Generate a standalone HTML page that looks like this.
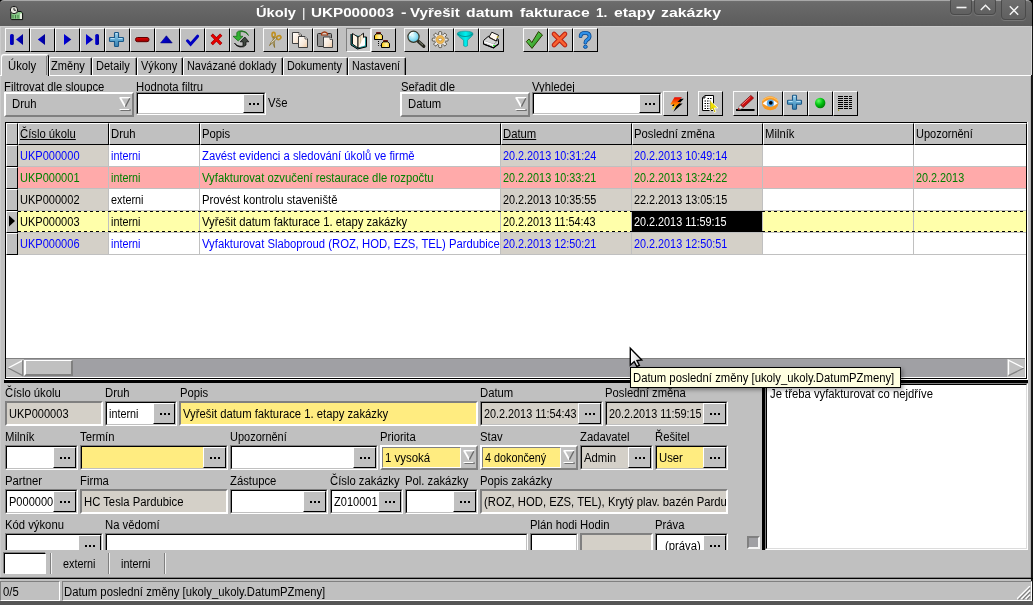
<!DOCTYPE html><html><head><meta charset="utf-8"><title>Ukoly</title><style>
html,body{margin:0;padding:0;}
body{width:1033px;height:605px;overflow:hidden;background:#c0c0c0;position:relative;font-family:"Liberation Sans",sans-serif;font-size:11.27px;color:#000;}
div,span{box-sizing:border-box;}
.a{position:absolute;}
.t{position:absolute;white-space:nowrap;line-height:14px;height:14px;}
.btn{position:absolute;background:#c0c0c0;border-top:1px solid #fafafa;border-left:1px solid #fafafa;border-right:1px solid #000;border-bottom:1px solid #000;}
.sunk{position:absolute;border-top:1px solid #808080;border-left:1px solid #808080;border-right:1px solid #fff;border-bottom:1px solid #fff;overflow:hidden;}
.sunk2{position:absolute;border-top:1px solid #808080;border-left:1px solid #808080;border-right:1px solid #fff;border-bottom:1px solid #fff;overflow:hidden;}
.sunk2 > .in{position:absolute;left:0;top:0;right:0;bottom:0;border-top:1px solid #000;border-left:1px solid #000;border-right:1px solid #c0c0c0;border-bottom:1px solid #c0c0c0;overflow:hidden;}
.dots{position:absolute;background:#c0c0c0;border-top:1px solid #fff;border-left:1px solid #fff;border-right:1px solid #000;border-bottom:1px solid #000;}
.dots i{position:absolute;width:2px;height:2px;background:#000;top:10px;}
.combo{position:absolute;border-top:1px solid #fff;border-left:1px solid #fff;border-right:1px solid #808080;border-bottom:1px solid #808080;overflow:hidden;}
.hd{position:absolute;background:#c0c0c0;border-top:1px solid #fff;border-left:1px solid #fff;border-right:1px solid #000;border-bottom:1px solid #000;overflow:hidden;}
.cell{position:absolute;overflow:hidden;border-right:1px solid #c0c0c0;border-bottom:1px solid #c0c0c0;white-space:nowrap;}
.cell span{position:absolute;left:2px;top:4px;line-height:14px;}
</style></head><body><div id="root" style="position:absolute;left:0;top:0;width:1033px;height:605px;overflow:hidden;will-change:transform;">
<div class="a" style="left:0;top:0;width:1033px;height:26px;background:#000;"></div>
<div class="a" style="left:0;top:0;width:1032px;height:26px;background:linear-gradient(#707070 0,#6a6a6a 2px,#5c5c5c 100%);border-radius:4px 5px 0 0;border-top:1px solid #a8a8a8;"></div>
<svg class="a" style="left:8px;top:4px" width="18" height="18" viewBox="8 4 18 18"><path d="M10.8 12.5H17L18 11.5H21L22.6 13V19.6H11.6L10.8 18.5Z" fill="#88c888" stroke="#101010" stroke-width="1"/><path d="M20 13.5H22V19H20Z" fill="#e8f0e0"/><path d="M13 15V18.5M15.5 15V18.5M18 15V18.5" stroke="#408040" stroke-width="1"/><circle cx="14" cy="10" r="3.7" fill="#e8e8e0" stroke="#181818" stroke-width="1"/><path d="M14 7.6V10.2H16.2" fill="none" stroke="#202020" stroke-width="1"/></svg>
<div class="t" style="left:256.1px;top:5px;font-size:13.5px;font-weight:bold;color:#fff;line-height:16px;height:16px;transform-origin:0 0;transform:scaleX(1.085);">Úkoly</div>
<div class="t" style="left:302.1px;top:5px;font-size:13.5px;font-weight:normal;color:#fff;line-height:16px;height:16px;transform-origin:0 0;transform:scaleX(1.000);">|</div>
<div class="t" style="left:311.1px;top:5px;font-size:13.5px;font-weight:bold;color:#fff;line-height:16px;height:16px;transform-origin:0 0;transform:scaleX(1.128);">UKP000003</div>
<div class="t" style="left:400.6px;top:5px;font-size:13.5px;font-weight:bold;color:#fff;line-height:16px;height:16px;transform-origin:0 0;transform:scaleX(1.223);">-</div>
<div class="t" style="left:409.7px;top:5px;font-size:13.5px;font-weight:bold;color:#fff;line-height:16px;height:16px;transform-origin:0 0;transform:scaleX(1.118);">Vyřešit</div>
<div class="t" style="left:465.9px;top:5px;font-size:13.5px;font-weight:bold;color:#fff;line-height:16px;height:16px;transform-origin:0 0;transform:scaleX(1.168);">datum</div>
<div class="t" style="left:519.6px;top:5px;font-size:13.5px;font-weight:bold;color:#fff;line-height:16px;height:16px;transform-origin:0 0;transform:scaleX(1.163);">fakturace</div>
<div class="t" style="left:595.7px;top:5px;font-size:13.5px;font-weight:bold;color:#fff;line-height:16px;height:16px;transform-origin:0 0;transform:scaleX(1.013);">1.</div>
<div class="t" style="left:613.8px;top:5px;font-size:13.5px;font-weight:bold;color:#fff;line-height:16px;height:16px;transform-origin:0 0;transform:scaleX(1.168);">etapy</div>
<div class="t" style="left:661.1px;top:5px;font-size:13.5px;font-weight:bold;color:#fff;line-height:16px;height:16px;transform-origin:0 0;transform:scaleX(1.176);">zakázky</div>
<div class="a" style="left:950px;top:-3px;width:22px;height:18px;border:1px solid #4a4a4a;border-radius:4px;background:linear-gradient(#6e6e6e,#606060);box-shadow:0 1px 0 #777;"><svg class="a" style="left:0;top:0" width="22" height="18"><path d="M5.5 9.5H15.5" stroke="#f4f4f4" stroke-width="1.6"/></svg></div>
<div class="a" style="left:974px;top:-3px;width:22px;height:18px;border:1px solid #4a4a4a;border-radius:4px;background:linear-gradient(#6e6e6e,#606060);box-shadow:0 1px 0 #777;"><svg class="a" style="left:0;top:0" width="22" height="18"><path d="M5.8 12L10.5 7.3L15.2 12" stroke="#f4f4f4" stroke-width="1.4" fill="none"/></svg></div>
<div class="a" style="left:1001px;top:-3px;width:25px;height:23px;border:1px solid #4a4a4a;border-radius:4px;background:linear-gradient(#6e6e6e,#606060);box-shadow:0 1px 0 #777;"><svg class="a" style="left:0;top:0" width="25" height="23"><path d="M7.8 8.3L16.2 16.7M16.2 8.3L7.8 16.7" stroke="#f4f4f4" stroke-width="1.4" fill="none"/></svg></div>
<div class="a" style="left:1030px;top:76px;width:1px;height:501px;background:#b0b0b0;"></div>
<div class="a" style="left:1031px;top:75px;width:1px;height:530px;background:#161616;"></div>
<div class="a" style="left:1031px;top:26px;width:1px;height:49px;background:#d4d4d4;"></div>
<div class="a" style="left:1032px;top:26px;width:1px;height:579px;background:#161616;"></div>
<div class="a" style="left:0;top:601px;width:1033px;height:4px;background:#555;"></div>
<div class="a" style="left:0;top:26px;width:1030px;height:1px;background:#cccccc;"></div>
<div class="a" style="left:0;top:26px;width:1px;height:575px;background:#cccccc;"></div>
<svg width="0" height="0" style="position:absolute"><defs>
<linearGradient id="gb" x1="0" y1="0" x2="1" y2="0"><stop offset="0" stop-color="#0000e0"/><stop offset="1" stop-color="#000090"/></linearGradient>
<linearGradient id="gpl" x1="0" y1="0" x2="0" y2="1"><stop offset="0" stop-color="#a8d8f0"/><stop offset="0.5" stop-color="#60a8d0"/><stop offset="1" stop-color="#3880b0"/></linearGradient>
<linearGradient id="grd" x1="0" y1="0" x2="0" y2="1"><stop offset="0" stop-color="#e80000"/><stop offset="1" stop-color="#900000"/></linearGradient>
<linearGradient id="ggr" x1="0" y1="0" x2="1" y2="1"><stop offset="0" stop-color="#70e060"/><stop offset="1" stop-color="#208818"/></linearGradient>
<linearGradient id="gyl" x1="0" y1="0" x2="1" y2="0"><stop offset="0" stop-color="#ffc800"/><stop offset="0.6" stop-color="#fff0a0"/><stop offset="1" stop-color="#ffd020"/></linearGradient>
<linearGradient id="gfl" x1="0" y1="0" x2="0" y2="1"><stop offset="0" stop-color="#e80000"/><stop offset="0.5" stop-color="#ff8000"/><stop offset="1" stop-color="#ffff00"/></linearGradient>
<linearGradient id="gcy" x1="0" y1="0" x2="1" y2="0"><stop offset="0" stop-color="#00b0b0"/><stop offset="0.55" stop-color="#00f0f0"/><stop offset="1" stop-color="#00a8a8"/></linearGradient>
<radialGradient id="gball" cx="0.35" cy="0.3" r="0.8"><stop offset="0" stop-color="#60ff60"/><stop offset="0.5" stop-color="#00c010"/><stop offset="1" stop-color="#007000"/></radialGradient>
<radialGradient id="glens" cx="0.4" cy="0.35" r="0.8"><stop offset="0" stop-color="#e8ffff"/><stop offset="0.6" stop-color="#80d8f0"/><stop offset="1" stop-color="#40a8d0"/></radialGradient>
<linearGradient id="gpg" x1="0" y1="0" x2="1" y2="1"><stop offset="0" stop-color="#ffffff"/><stop offset="0.6" stop-color="#f8e8d8"/><stop offset="1" stop-color="#f0c8a0"/></linearGradient>
<linearGradient id="gq" x1="0" y1="0" x2="1" y2="1"><stop offset="0" stop-color="#50a8f0"/><stop offset="1" stop-color="#1060b0"/></linearGradient>
</defs></svg>
<div class="btn" id="tb0" style="left:5px;top:28px;width:25px;height:24px;"><svg class="a" style="left:-1px;top:-1px" width="25" height="24"><rect x="5" y="6" width="3.8" height="11" rx="1.6" fill="url(#gb)"/><path d="M11 11.5L18 6V17Z" fill="url(#gb)"/></svg></div>
<div class="btn" id="tb1" style="left:30px;top:28px;width:25px;height:24px;"><svg class="a" style="left:-1px;top:-1px" width="25" height="24"><path d="M7.8 11.5L15 6V17Z" fill="url(#gb)"/></svg></div>
<div class="btn" id="tb2" style="left:55px;top:28px;width:25px;height:24px;"><svg class="a" style="left:-1px;top:-1px" width="25" height="24"><path d="M16.3 11.5L9 6V17Z" fill="url(#gb)"/></svg></div>
<div class="btn" id="tb3" style="left:80px;top:28px;width:25px;height:24px;"><svg class="a" style="left:-1px;top:-1px" width="25" height="24"><path d="M13 11.5L6 6V17Z" fill="url(#gb)"/><rect x="15.2" y="6" width="3.8" height="11" rx="1.6" fill="url(#gb)"/></svg></div>
<div class="btn" id="tb4" style="left:105px;top:28px;width:25px;height:24px;"><svg class="a" style="left:-1px;top:-1px" width="25" height="24"><path d="M10.3 4.5H12.7Q13.5 4.5 13.5 5.3V9.5H17.7Q18.5 9.5 18.5 10.3V12.7Q18.5 13.5 17.7 13.5H13.5V17.7Q13.5 18.5 12.7 18.5H10.3Q9.5 18.5 9.5 17.7V13.5H5.3Q4.5 13.5 4.5 12.7V10.3Q4.5 9.5 5.3 9.5H9.5V5.3Q9.5 4.5 10.3 4.5Z" fill="url(#gpl)" stroke="#1a5888" stroke-width="1.1"/><path d="M10.6 5.6H12.4M5.6 10.6H9.6M13.4 10.6H17.4" stroke="#c8ecff" stroke-width="0.9" fill="none"/></svg></div>
<div class="btn" id="tb5" style="left:130px;top:28px;width:25px;height:24px;"><svg class="a" style="left:-1px;top:-1px" width="25" height="24"><rect x="5.5" y="9.5" width="13.5" height="4.2" rx="2" fill="url(#grd)" stroke="#600000" stroke-width="1"/></svg></div>
<div class="btn" id="tb6" style="left:155px;top:28px;width:25px;height:24px;"><svg class="a" style="left:-1px;top:-1px" width="25" height="24"><path d="M11.4 7.8L17.2 14.9H5.6Z" fill="url(#gb)" stroke="#000080" stroke-width="0.6"/></svg></div>
<div class="btn" id="tb7" style="left:180px;top:28px;width:25px;height:24px;"><svg class="a" style="left:-1px;top:-1px" width="25" height="24"><path d="M7.5 12.8L10.6 16.2L17.6 8.2" fill="none" stroke="#0000c0" stroke-width="3" stroke-linecap="round" stroke-linejoin="miter"/></svg></div>
<div class="btn" id="tb8" style="left:205px;top:28px;width:25px;height:24px;"><svg class="a" style="left:-1px;top:-1px" width="25" height="24"><path d="M6.7 6.7L16.2 16.2M16.2 6.7L6.7 16.2" fill="none" stroke="#900000" stroke-width="3.2" stroke-linecap="butt"/><path d="M7 7L15.9 15.9M15.9 7L7 15.9" fill="none" stroke="#e80000" stroke-width="2.2" stroke-linecap="butt"/></svg></div>
<div class="btn" id="tb9" style="left:230px;top:28px;width:25px;height:24px;"><svg class="a" style="left:-1px;top:-1px" width="25" height="24"><path d="M18.5 7.5Q16 3.2 10.2 3.6L10.2 8.3H13L8.2 13L3 8.3H6.8V4.5Q8 2.5 12 2.8Q17 3.2 18.5 7.5Z" fill="#30b030" stroke="#106010" stroke-width="0.7"/><path d="M4.5 15Q7 18.8 13 18.2L13 13.8H10.2L14.8 9L18.8 13.8H16V17Q14 19.6 10 19Q6 18.4 4.5 15Z" fill="#404840" stroke="#000" stroke-width="0.7"/></svg></div>
<div class="btn" id="tb10" style="left:263px;top:28px;width:25px;height:24px;"><svg class="a" style="left:-1px;top:-1px" width="25" height="24"><ellipse cx="10.6" cy="6.8" rx="1.6" ry="2.4" fill="none" stroke="#c09020" stroke-width="1.6"/><ellipse cx="15.8" cy="9.6" rx="2.2" ry="1.8" fill="none" stroke="#c09020" stroke-width="1.6" transform="rotate(-30 15.8 9.6)"/><path d="M11 9L11.6 19.5L10.2 16L10.2 9Z" fill="#e8e8e8" stroke="#806820" stroke-width="0.8"/><path d="M14 10.5L6.5 17.5L8.2 14L12.5 9.8Z" fill="#e8e8e8" stroke="#806820" stroke-width="0.8"/></svg></div>
<div class="btn" id="tb11" style="left:288px;top:28px;width:25px;height:24px;"><svg class="a" style="left:-1px;top:-1px" width="25" height="24"><path d="M4.5 4.5H11L13.5 7V15.5H4.5Z" fill="url(#gpg)" stroke="#404040" stroke-width="1"/><path d="M11 4.5V7H13.5" fill="#fff" stroke="#404040" stroke-width="0.8"/><path d="M10.5 8.5H17L19.5 11V19.5H10.5Z" fill="url(#gpg)" stroke="#404040" stroke-width="1"/><path d="M17 8.5V11H19.5" fill="#fff" stroke="#404040" stroke-width="0.8"/></svg></div>
<div class="btn" id="tb12" style="left:313px;top:28px;width:25px;height:24px;"><svg class="a" style="left:-1px;top:-1px" width="25" height="24"><rect x="4.5" y="5.5" width="14" height="13" rx="1" fill="#989898" stroke="#303030" stroke-width="1"/><path d="M8.5 7V5.5Q11.5 2.5 14.5 5.5V7Z" fill="#d8d0c8" stroke="#a03810" stroke-width="1.2"/><path d="M10.5 9H17L19.5 11.5V19.5H10.5Z" fill="url(#gpg)" stroke="#404040" stroke-width="1"/><path d="M17 9V11.5H19.5" fill="#fff" stroke="#404040" stroke-width="0.8"/></svg></div>
<div class="a" id="tb13" style="left:346px;top:28px;width:25px;height:24px;background:#c8c8c8;border-top:1px solid #808080;border-left:1px solid #808080;border-right:1px solid #fff;border-bottom:1px solid #fff;"><svg class="a" style="left:-1px;top:-1px" width="25" height="24"><path d="M5 6V17L11.5 21L20.5 18.8V9H18" fill="#209898" stroke="#000" stroke-width="1"/><path d="M6.5 5.5L12 9V20L6.5 16Z" fill="#fff4e4" stroke="#000" stroke-width="0.9"/><path d="M12 9L14.5 7.5L17.5 5.2V16.5L12 20Z" fill="#f4e4c8" stroke="#000" stroke-width="0.9"/><path d="M14.5 7.5V18.2" stroke="#c8b898" stroke-width="0.8"/><path d="M17.5 9.5H19V17.5L12.5 19.5" fill="#fff" stroke="none"/></svg></div>
<div class="btn" id="tb14" style="left:371px;top:28px;width:25px;height:24px;"><svg class="a" style="left:-1px;top:-1px" width="25" height="24"><path d="M5.5 4.5H9.5V6H5.5Z" fill="#900000" stroke="#600000" stroke-width="0.8"/><path d="M3.5 7.5L5.5 5.8H9.5L11.5 7.5V11.5H3.5Z" fill="url(#gyl)" stroke="#000" stroke-width="1"/><path d="M12.5 12.5H16.5V14H12.5Z" fill="#900000" stroke="#600000" stroke-width="0.8"/><path d="M10.5 15.5L12.5 13.8H16.5L18.5 15.5V19.5H10.5Z" fill="url(#gyl)" stroke="#000" stroke-width="1"/><path d="M7.5 13V17.5H9.5" fill="none" stroke="#000" stroke-width="1" stroke-dasharray="1 1"/></svg></div>
<div class="btn" id="tb15" style="left:404px;top:28px;width:25px;height:24px;"><svg class="a" style="left:-1px;top:-1px" width="25" height="24"><path d="M14.2 13.2L19.8 18.3" stroke="#282820" stroke-width="3.2" stroke-linecap="round"/><path d="M15 13.6L19 17.2" stroke="#a0a890" stroke-width="0.8"/><circle cx="9.5" cy="8.8" r="5.6" fill="url(#glens)" stroke="#383828" stroke-width="1.2"/><path d="M5.8 8Q6.4 4.8 9.8 4.6" fill="none" stroke="#fff" stroke-width="1.2"/></svg></div>
<div class="btn" id="tb16" style="left:429px;top:28px;width:25px;height:24px;"><svg class="a" style="left:-1px;top:-1px" width="25" height="24"><g transform="translate(11.2,11.6)"><g fill="#e8e8e8" stroke="#403828" stroke-width="0.8"><rect x="-1.5" y="-8" width="3" height="16" rx="1"/><rect x="-1.5" y="-8" width="3" height="16" rx="1" transform="rotate(45)"/><rect x="-1.5" y="-8" width="3" height="16" rx="1" transform="rotate(90)"/><rect x="-1.5" y="-8" width="3" height="16" rx="1" transform="rotate(135)"/></g><circle r="5.2" fill="#e8e8e8"/><circle r="4.2" fill="#f0b850" stroke="#c89038" stroke-width="0.6"/><ellipse rx="1.8" ry="1.3" fill="#fff" stroke="#806020" stroke-width="0.5"/></g></svg></div>
<div class="btn" id="tb17" style="left:454px;top:28px;width:25px;height:24px;"><svg class="a" style="left:-1px;top:-1px" width="25" height="24"><path d="M3.2 6Q3.2 3.2 11 3.2Q19 3.2 19 6Q19 7.5 13.5 12.2V17.8Q11.5 19.4 9.6 17.8V12.2Q3.2 7.5 3.2 6Z" fill="url(#gcy)" stroke="#009090" stroke-width="0.6"/><path d="M3.6 6Q7 8.6 11 8.6Q15.5 8.6 18.6 6" fill="none" stroke="#008888" stroke-width="0.8"/></svg></div>
<div class="btn" id="tb18" style="left:479px;top:28px;width:25px;height:24px;"><svg class="a" style="left:-1px;top:-1px" width="25" height="24"><path d="M10 9L12.8 4.2L19.5 7.2L17.2 13Z" fill="#fff8f0" stroke="#000" stroke-width="0.9"/><path d="M10.2 9.6L16.8 13" stroke="#f0c890" stroke-width="1.2"/><path d="M4.5 12.5L9.5 8.2L10.2 9.5L17 13L19.5 11.5V16L14.5 19.8L4.5 16Z" fill="#d8d8d8" stroke="#000" stroke-width="1"/><path d="M4.5 12.8L14.5 16.4L19.5 12.2" fill="none" stroke="#888" stroke-width="0.8"/><path d="M5.2 13.6L14 16.8V19" fill="none" stroke="#fff" stroke-width="1.4"/><path d="M4.5 16L14.5 19.8L19.5 16" fill="none" stroke="#000" stroke-width="1.3"/><rect x="14.2" y="17" width="1.6" height="1.4" fill="#00e000"/><path d="M17.8 9.6L19.4 8.4" stroke="#d0c020" stroke-width="1.2"/></svg></div>
<div class="btn" id="tb19" style="left:523px;top:28px;width:25px;height:24px;"><svg class="a" style="left:-1px;top:-1px" width="25" height="24"><path d="M3.3 13.6L6 11L8.8 14.6L15.5 3.6L19.5 7L9 20.4Z" fill="url(#ggr)" stroke="#283c00" stroke-width="1" stroke-linejoin="round"/></svg></div>
<div class="btn" id="tb20" style="left:548px;top:28px;width:25px;height:24px;"><svg class="a" style="left:-1px;top:-1px" width="25" height="24"><path d="M6 6L17 17M17 6L6 17" fill="none" stroke="#b82010" stroke-width="4.6" stroke-linecap="round"/><path d="M6 6L17 17M17 6L6 17" fill="none" stroke="#f86030" stroke-width="2.6" stroke-linecap="round"/></svg></div>
<div class="btn" id="tb21" style="left:573px;top:28px;width:25px;height:24px;"><svg class="a" style="left:-1px;top:-1px" width="25" height="24"><path d="M7.6 8.2Q7.6 4.8 12 4.8Q16.6 4.8 16.6 8.2Q16.6 10.4 14.2 11.8Q12.6 12.8 12.4 14.6" fill="none" stroke="#0c4a90" stroke-width="3.8" stroke-linecap="round"/><path d="M7.6 8.2Q7.6 4.8 12 4.8Q16.6 4.8 16.6 8.2Q16.6 10.4 14.2 11.8Q12.6 12.8 12.4 14.6" fill="none" stroke="#3090e8" stroke-width="2.2" stroke-linecap="round"/><ellipse cx="12.4" cy="18.8" rx="1.9" ry="1.6" fill="#3090e8" stroke="#0c4a90" stroke-width="0.9"/></svg></div>
<div class="a" style="left:0;top:75px;width:1031px;height:1px;background:#fff;"></div>
<div class="a" style="left:49px;top:57px;width:43px;height:18px;border-top:1px solid #fff;border-left:1px solid #fff;border-right:1px solid #000;border-radius:2px 2px 0 0;"></div>
<div class="a" style="left:90px;top:58px;width:1px;height:17px;background:#808080;"></div>
<div class="t" style="left:51px;top:59px;color:#000;font-size:12px;transform-origin:0 0;transform:scaleX(0.924);">Změny</div>
<div class="a" style="left:92px;top:57px;width:45px;height:18px;border-top:1px solid #fff;border-left:1px solid #fff;border-right:1px solid #000;border-radius:2px 2px 0 0;"></div>
<div class="a" style="left:135px;top:58px;width:1px;height:17px;background:#808080;"></div>
<div class="t" style="left:95.5px;top:59px;color:#000;font-size:12px;transform-origin:0 0;transform:scaleX(0.918);">Detaily</div>
<div class="a" style="left:137px;top:57px;width:46px;height:18px;border-top:1px solid #fff;border-left:1px solid #fff;border-right:1px solid #000;border-radius:2px 2px 0 0;"></div>
<div class="a" style="left:181px;top:58px;width:1px;height:17px;background:#808080;"></div>
<div class="t" style="left:140.5px;top:59px;color:#000;font-size:12px;transform-origin:0 0;transform:scaleX(0.92);">Výkony</div>
<div class="a" style="left:183px;top:57px;width:100px;height:18px;border-top:1px solid #fff;border-left:1px solid #fff;border-right:1px solid #000;border-radius:2px 2px 0 0;"></div>
<div class="a" style="left:281px;top:58px;width:1px;height:17px;background:#808080;"></div>
<div class="t" style="left:187px;top:59px;color:#000;font-size:12px;transform-origin:0 0;transform:scaleX(0.907);">Navázané doklady</div>
<div class="a" style="left:283px;top:57px;width:65px;height:18px;border-top:1px solid #fff;border-left:1px solid #fff;border-right:1px solid #000;border-radius:2px 2px 0 0;"></div>
<div class="a" style="left:346px;top:58px;width:1px;height:17px;background:#808080;"></div>
<div class="t" style="left:286.5px;top:59px;color:#000;font-size:12px;transform-origin:0 0;transform:scaleX(0.904);">Dokumenty</div>
<div class="a" style="left:348px;top:57px;width:58px;height:18px;border-top:1px solid #fff;border-left:1px solid #fff;border-right:1px solid #000;border-radius:2px 2px 0 0;"></div>
<div class="a" style="left:404px;top:58px;width:1px;height:17px;background:#808080;"></div>
<div class="t" style="left:351.5px;top:59px;color:#000;font-size:12px;transform-origin:0 0;transform:scaleX(0.89);">Nastavení</div>
<div class="a" style="left:1px;top:54px;width:48px;height:22px;background:#c0c0c0;border-top:1px solid #fff;border-left:1px solid #fff;box-shadow:inset 0 1px 0 #dedede;border-right:1px solid #000;border-radius:3px 3px 0 0;"></div>
<div class="a" style="left:46px;top:56px;width:1px;height:19px;background:#808080;"></div>
<div class="t" style="left:8px;top:59px;color:#000;font-size:12px;transform-origin:0 0;transform:scaleX(0.94);">Úkoly</div>
<div class="t" style="left:4px;top:80px;color:#000;font-size:12px;transform-origin:0 0;transform:scaleX(0.94);">Filtrovat dle sloupce</div>
<div class="t" style="left:136px;top:80px;color:#000;font-size:12px;transform-origin:0 0;transform:scaleX(0.94);">Hodnota filtru</div>
<div class="t" style="left:401px;top:80px;color:#000;font-size:12px;transform-origin:0 0;transform:scaleX(0.94);">Seřadit dle</div>
<div class="t" style="left:532px;top:80px;color:#000;font-size:12px;transform-origin:0 0;transform:scaleX(0.94);">Vyhledej</div>
<div class="combo" style="left:4px;top:92px;width:130px;height:25px;background:#c0c0c0;border-width:2px;"><div class="t" style="left:6px;top:3px;font-size:12px;transform-origin:0 0;transform:scaleX(0.94);">Druh</div><svg class="a" style="right:1.5px;top:3px" width="12" height="16" viewBox="0 0 12 16"><path d="M1.2 0.8L6.2 9.8" stroke="#fff" stroke-width="1.8" fill="none"/><path d="M0.5 0.7H11.2" stroke="#fff" stroke-width="1.4" fill="none"/><path d="M10.8 1.2L6.4 9.6" stroke="#686868" stroke-width="1.3" fill="none"/><path d="M0.5 12.5H11" stroke="#fff" stroke-width="1"/><path d="M1.5 13.5H11.5" stroke="#707070" stroke-width="1"/><path d="M11 12V14" stroke="#707070" stroke-width="1"/></svg></div>
<div class="combo" style="left:400px;top:92px;width:130px;height:25px;background:#c0c0c0;border-width:2px;"><div class="t" style="left:6px;top:3px;font-size:12px;transform-origin:0 0;transform:scaleX(0.94);">Datum</div><svg class="a" style="right:1.5px;top:3px" width="12" height="16" viewBox="0 0 12 16"><path d="M1.2 0.8L6.2 9.8" stroke="#fff" stroke-width="1.8" fill="none"/><path d="M0.5 0.7H11.2" stroke="#fff" stroke-width="1.4" fill="none"/><path d="M10.8 1.2L6.4 9.6" stroke="#686868" stroke-width="1.3" fill="none"/><path d="M0.5 12.5H11" stroke="#fff" stroke-width="1"/><path d="M1.5 13.5H11.5" stroke="#707070" stroke-width="1"/><path d="M11 12V14" stroke="#707070" stroke-width="1"/></svg></div>
<div class="a" style="left:136px;top:92px;width:130px;height:23px;background:#fff;border-top:1px solid #808080;border-left:1px solid #808080;border-right:1px solid #fff;border-bottom:1px solid #fff;overflow:hidden;"><div class="a" style="left:0;top:0;right:0;bottom:0;border-top:1px solid #000;border-left:1px solid #000;border-right:1px solid #c0c0c0;border-bottom:1px solid #c0c0c0;"></div><div class="t" style="left:3px;top:4px;font-size:12px;transform-origin:0 0;transform:scaleX(0.94);color:#000"></div></div>

<div class="dots" style="left:243px;top:94px;width:21px;height:19px;"><i style="left:5px;top:8px"></i><i style="left:9px;top:8px"></i><i style="left:13px;top:8px"></i></div>
<div class="t" style="left:268px;top:96px;color:#000;font-size:12px;transform-origin:0 0;transform:scaleX(0.94);">Vše</div>
<div class="a" style="left:532px;top:92px;width:130px;height:23px;background:#fff;border-top:1px solid #808080;border-left:1px solid #808080;border-right:1px solid #fff;border-bottom:1px solid #fff;overflow:hidden;"><div class="a" style="left:0;top:0;right:0;bottom:0;border-top:1px solid #000;border-left:1px solid #000;border-right:1px solid #c0c0c0;border-bottom:1px solid #c0c0c0;"></div><div class="t" style="left:3px;top:4px;font-size:12px;transform-origin:0 0;transform:scaleX(0.94);color:#000"></div></div>

<div class="dots" style="left:639px;top:94px;width:21px;height:19px;"><i style="left:5px;top:8px"></i><i style="left:9px;top:8px"></i><i style="left:13px;top:8px"></i></div>
<div class="btn" id="fb0" style="left:663px;top:91px;width:25px;height:25px;"><svg class="a" style="left:-1px;top:-1px" width="25" height="25"><path d="M12.5 7.2H20L15.4 12H18.8L9.6 20.3L12.5 14.5H8.2Z" transform="translate(0.8,0.5)" fill="#000"/><path d="M11.5 6.2H19L14.4 11H17.8L8.6 19.3L11.5 13.5H7.2Z" fill="url(#gfl)"/></svg></div>
<div class="btn" id="fb1" style="left:698px;top:91px;width:25px;height:25px;"><svg class="a" style="left:-1px;top:-1px" width="25" height="25"><path d="M7 4.5H15.5V19.5H4.5V7Z" fill="#fff" stroke="#000" stroke-width="1"/><path d="M7 4.5V7H4.5Z" fill="#c0c0c0" stroke="#000" stroke-width="0.8"/><g stroke="#000" stroke-width="1.2" stroke-dasharray="1.5 1"><path d="M6.5 10H14"/><path d="M6.5 12.5H14"/><path d="M6.5 15H14"/><path d="M6.5 17.5H14"/><path d="M9.5 7.5H14"/></g><path d="M12 9.5V20L14.6 17.6L16.4 21.6L18 20.8L16.2 17H20Z" fill="#f0e000" stroke="#fff" stroke-width="0.8"/><path d="M12.5 10V19L14.8 16.8L16.8 21" fill="none" stroke="#a09000" stroke-width="0.6"/></svg></div>
<div class="btn" id="fb2" style="left:733px;top:91px;width:25px;height:25px;"><svg class="a" style="left:-1px;top:-1px" width="25" height="25"><path d="M3 19H21.5" stroke="#000" stroke-width="2"/><path d="M17.8 4.4L20.6 7L10.3 16.6L7.5 14Z" fill="#c81010" stroke="#780000" stroke-width="0.7"/><path d="M17.4 6L9.2 13.6" stroke="#ff9090" stroke-width="0.8"/><path d="M7.2 14L10.2 17L7.6 18.2L5.2 18.6L5.8 16Z" fill="#e0e0e0" stroke="#606060" stroke-width="0.6"/><path d="M5.2 18.6L6.4 17.4" stroke="#c00000" stroke-width="1.4"/></svg></div>
<div class="btn" id="fb3" style="left:758px;top:91px;width:25px;height:25px;"><svg class="a" style="left:-1px;top:-1px" width="25" height="25"><ellipse cx="12.2" cy="12.2" rx="8.2" ry="7" fill="#f89820"/><path d="M4.2 12.4Q12.2 4.6 20.2 12.4Q12.2 19 4.2 12.4Z" fill="#fff" stroke="#e08010" stroke-width="0.5"/><circle cx="12.4" cy="12.2" r="3.6" fill="#58a8e8"/><circle cx="12.8" cy="11.8" r="1.9" fill="#000"/><path d="M4.4 9.6Q12 2.6 20 9.6" fill="none" stroke="#ffc060" stroke-width="1.2"/></svg></div>
<div class="btn" id="fb4" style="left:783px;top:91px;width:25px;height:25px;"><svg class="a" style="left:-1px;top:-1px" width="25" height="25"><g transform="translate(0,-0.2)"><path d="M10.3 4.5H12.7Q13.5 4.5 13.5 5.3V9.5H17.7Q18.5 9.5 18.5 10.3V12.7Q18.5 13.5 17.7 13.5H13.5V17.7Q13.5 18.5 12.7 18.5H10.3Q9.5 18.5 9.5 17.7V13.5H5.3Q4.5 13.5 4.5 12.7V10.3Q4.5 9.5 5.3 9.5H9.5V5.3Q9.5 4.5 10.3 4.5Z" fill="url(#gpl)" stroke="#1a5888" stroke-width="1.1"/><path d="M10.6 5.6H12.4M5.6 10.6H9.6M13.4 10.6H17.4" stroke="#c8ecff" stroke-width="0.9" fill="none"/></g></svg></div>
<div class="btn" id="fb5" style="left:808px;top:91px;width:25px;height:25px;"><svg class="a" style="left:-1px;top:-1px" width="25" height="25"><circle cx="12.2" cy="12" r="5.2" fill="url(#gball)"/></svg></div>
<div class="btn" id="fb6" style="left:833px;top:91px;width:25px;height:25px;"><svg class="a" style="left:-1px;top:-1px" width="25" height="25"><g stroke="#000" stroke-width="1"><path d="M5 5.5H10M11 5.5H15M16 5.5H19"/><path d="M5 7.5H10M11 7.5H15M16 7.5H19"/><path d="M5 9.5H10M11 9.5H15M16 9.5H19"/><path d="M5 11.5H10M11 11.5H15M16 11.5H19"/><path d="M5 13.5H10M11 13.5H15M16 13.5H19"/><path d="M5 15.5H10M11 15.5H15M16 15.5H19"/><path d="M5 17.5H10M11 17.5H15M16 17.5H19"/></g><rect x="5" y="18.6" width="1.2" height="1.2" fill="#a09000"/></svg></div>
<div class="a" style="left:5px;top:122px;width:1023px;height:258px;background:#fff;"></div>
<div class="a" style="left:5px;top:122px;width:1022px;height:257px;border:1px solid #000;"></div>
<div class="hd" style="left:6px;top:123px;width:12px;height:22px;"></div>
<div class="hd" style="left:18px;top:123px;width:91px;height:22px;"><div class="t" style="left:1px;top:3px;font-size:12px;transform-origin:0 0;transform:scaleX(0.94);text-decoration:underline;">Číslo úkolu</div></div>
<div class="hd" style="left:109px;top:123px;width:91px;height:22px;"><div class="t" style="left:1px;top:3px;font-size:12px;transform-origin:0 0;transform:scaleX(0.94);">Druh</div></div>
<div class="hd" style="left:200px;top:123px;width:301px;height:22px;"><div class="t" style="left:1px;top:3px;font-size:12px;transform-origin:0 0;transform:scaleX(0.94);">Popis</div></div>
<div class="hd" style="left:501px;top:123px;width:131px;height:22px;"><div class="t" style="left:1px;top:3px;font-size:12px;transform-origin:0 0;transform:scaleX(0.94);text-decoration:underline;">Datum</div></div>
<div class="hd" style="left:632px;top:123px;width:131px;height:22px;"><div class="t" style="left:1px;top:3px;font-size:12px;transform-origin:0 0;transform:scaleX(0.94);">Poslední změna</div></div>
<div class="hd" style="left:763px;top:123px;width:151px;height:22px;"><div class="t" style="left:1px;top:3px;font-size:12px;transform-origin:0 0;transform:scaleX(0.94);">Milník</div></div>
<div class="hd" style="left:914px;top:123px;width:113px;height:22px;"><div class="t" style="left:1px;top:3px;font-size:12px;transform-origin:0 0;transform:scaleX(0.915);">Upozornění</div></div>
<div class="hd" style="left:6px;top:145px;width:12px;height:22px;"></div>
<div class="cell" style="left:18px;top:145px;width:91px;height:22px;background:#d4d0c8;color:#0000ff;"><span style="font-size:12px;transform-origin:0 0;transform:scaleX(0.92);">UKP000000</span></div>
<div class="cell" style="left:109px;top:145px;width:91px;height:22px;background:#fff;color:#0000ff;"><span style="font-size:12px;transform-origin:0 0;transform:scaleX(0.9);">interni</span></div>
<div class="cell" style="left:200px;top:145px;width:301px;height:22px;background:#fff;color:#0000ff;"><span style="font-size:12px;transform-origin:0 0;transform:scaleX(0.94);">Zavést evidenci a sledování úkolů ve firmě</span></div>
<div class="cell" style="left:501px;top:145px;width:131px;height:22px;background:#d4d0c8;color:#0000ff;"><span style="font-size:12px;transform-origin:0 0;transform:scaleX(0.902);">20.2.2013 10:31:24</span></div>
<div class="cell" style="left:632px;top:145px;width:131px;height:22px;background:#d4d0c8;color:#0000ff;"><span style="font-size:12px;transform-origin:0 0;transform:scaleX(0.902);">20.2.2013 10:49:14</span></div>
<div class="cell" style="left:763px;top:145px;width:151px;height:22px;background:#fff;color:#0000ff;"><span style="font-size:12px;transform-origin:0 0;transform:scaleX(0.94);"></span></div>
<div class="cell" style="left:914px;top:145px;width:112px;height:22px;background:#fff;color:#0000ff;border-right:none;"><span style="font-size:12px;transform-origin:0 0;transform:scaleX(0.94);"></span></div>
<div class="hd" style="left:6px;top:167px;width:12px;height:22px;"></div>
<div class="cell" style="left:18px;top:167px;width:91px;height:22px;background:#ffaaaa;color:#008000;"><span style="font-size:12px;transform-origin:0 0;transform:scaleX(0.92);">UKP000001</span></div>
<div class="cell" style="left:109px;top:167px;width:91px;height:22px;background:#ffaaaa;color:#008000;"><span style="font-size:12px;transform-origin:0 0;transform:scaleX(0.9);">interni</span></div>
<div class="cell" style="left:200px;top:167px;width:301px;height:22px;background:#ffaaaa;color:#008000;"><span style="font-size:12px;transform-origin:0 0;transform:scaleX(0.94);">Vyfakturovat ozvučení restaurace dle rozpočtu</span></div>
<div class="cell" style="left:501px;top:167px;width:131px;height:22px;background:#ffaaaa;color:#008000;"><span style="font-size:12px;transform-origin:0 0;transform:scaleX(0.902);">20.2.2013 10:33:21</span></div>
<div class="cell" style="left:632px;top:167px;width:131px;height:22px;background:#ffaaaa;color:#008000;"><span style="font-size:12px;transform-origin:0 0;transform:scaleX(0.902);">20.2.2013 13:24:22</span></div>
<div class="cell" style="left:763px;top:167px;width:151px;height:22px;background:#ffaaaa;color:#008000;"><span style="font-size:12px;transform-origin:0 0;transform:scaleX(0.94);"></span></div>
<div class="cell" style="left:914px;top:167px;width:112px;height:22px;background:#ffaaaa;color:#008000;border-right:none;"><span style="font-size:12px;transform-origin:0 0;transform:scaleX(0.902);">20.2.2013</span></div>
<div class="hd" style="left:6px;top:189px;width:12px;height:22px;"></div>
<div class="cell" style="left:18px;top:189px;width:91px;height:22px;background:#d4d0c8;color:#000;"><span style="font-size:12px;transform-origin:0 0;transform:scaleX(0.92);">UKP000002</span></div>
<div class="cell" style="left:109px;top:189px;width:91px;height:22px;background:#fff;color:#000;"><span style="font-size:12px;transform-origin:0 0;transform:scaleX(0.9);">externi</span></div>
<div class="cell" style="left:200px;top:189px;width:301px;height:22px;background:#fff;color:#000;"><span style="font-size:12px;transform-origin:0 0;transform:scaleX(0.94);">Provést kontrolu staveniště</span></div>
<div class="cell" style="left:501px;top:189px;width:131px;height:22px;background:#d4d0c8;color:#000;"><span style="font-size:12px;transform-origin:0 0;transform:scaleX(0.902);">20.2.2013 10:35:55</span></div>
<div class="cell" style="left:632px;top:189px;width:131px;height:22px;background:#d4d0c8;color:#000;"><span style="font-size:12px;transform-origin:0 0;transform:scaleX(0.902);">22.2.2013 13:05:15</span></div>
<div class="cell" style="left:763px;top:189px;width:151px;height:22px;background:#fff;color:#000;"><span style="font-size:12px;transform-origin:0 0;transform:scaleX(0.94);"></span></div>
<div class="cell" style="left:914px;top:189px;width:112px;height:22px;background:#fff;color:#000;border-right:none;"><span style="font-size:12px;transform-origin:0 0;transform:scaleX(0.94);"></span></div>
<div class="hd" style="left:6px;top:211px;width:12px;height:22px;"></div>
<div class="cell" style="left:18px;top:211px;width:91px;height:22px;background:#ffffaa;color:#000;"><span style="font-size:12px;transform-origin:0 0;transform:scaleX(0.92);">UKP000003</span></div>
<div class="cell" style="left:109px;top:211px;width:91px;height:22px;background:#ffffaa;color:#000;"><span style="font-size:12px;transform-origin:0 0;transform:scaleX(0.9);">interni</span></div>
<div class="cell" style="left:200px;top:211px;width:301px;height:22px;background:#ffffaa;color:#000;"><span style="font-size:12px;transform-origin:0 0;transform:scaleX(0.94);">Vyřešit datum fakturace 1. etapy zakázky</span></div>
<div class="cell" style="left:501px;top:211px;width:131px;height:22px;background:#ffffaa;color:#000;"><span style="font-size:12px;transform-origin:0 0;transform:scaleX(0.902);">20.2.2013 11:54:43</span></div>
<div class="cell" style="left:632px;top:211px;width:131px;height:22px;background:#000;color:#fff;"><span style="font-size:12px;transform-origin:0 0;transform:scaleX(0.902);">20.2.2013 11:59:15</span></div>
<div class="cell" style="left:763px;top:211px;width:151px;height:22px;background:#ffffaa;color:#000;"><span style="font-size:12px;transform-origin:0 0;transform:scaleX(0.94);"></span></div>
<div class="cell" style="left:914px;top:211px;width:112px;height:22px;background:#ffffaa;color:#000;border-right:none;"><span style="font-size:12px;transform-origin:0 0;transform:scaleX(0.94);"></span></div>
<div class="hd" style="left:6px;top:233px;width:12px;height:22px;"></div>
<div class="cell" style="left:18px;top:233px;width:91px;height:22px;background:#d4d0c8;color:#0000ff;"><span style="font-size:12px;transform-origin:0 0;transform:scaleX(0.92);">UKP000006</span></div>
<div class="cell" style="left:109px;top:233px;width:91px;height:22px;background:#fff;color:#0000ff;"><span style="font-size:12px;transform-origin:0 0;transform:scaleX(0.9);">interni</span></div>
<div class="cell" style="left:200px;top:233px;width:301px;height:22px;background:#fff;color:#0000ff;"><span style="font-size:12px;transform-origin:0 0;transform:scaleX(0.94);">Vyfakturovat Slaboproud (ROZ, HOD, EZS, TEL) Pardubice</span></div>
<div class="cell" style="left:501px;top:233px;width:131px;height:22px;background:#d4d0c8;color:#0000ff;"><span style="font-size:12px;transform-origin:0 0;transform:scaleX(0.902);">20.2.2013 12:50:21</span></div>
<div class="cell" style="left:632px;top:233px;width:131px;height:22px;background:#d4d0c8;color:#0000ff;"><span style="font-size:12px;transform-origin:0 0;transform:scaleX(0.902);">20.2.2013 12:50:51</span></div>
<div class="cell" style="left:763px;top:233px;width:151px;height:22px;background:#fff;color:#0000ff;"><span style="font-size:12px;transform-origin:0 0;transform:scaleX(0.94);"></span></div>
<div class="cell" style="left:914px;top:233px;width:112px;height:22px;background:#fff;color:#0000ff;border-right:none;"><span style="font-size:12px;transform-origin:0 0;transform:scaleX(0.94);"></span></div>
<svg class="a" style="left:8px;top:215px" width="8" height="13"><path d="M1 0.5L7 6L1 11.5Z" fill="#000"/></svg>
<div class="a" style="left:18px;top:211px;width:1008px;height:1px;background:repeating-linear-gradient(90deg,#000 0,#000 3px,transparent 3px,transparent 6px);"></div>
<div class="a" style="left:18px;top:231px;width:1008px;height:1px;background:repeating-linear-gradient(90deg,#000 0,#000 3px,transparent 3px,transparent 6px);"></div>
<div class="a" style="left:6px;top:358px;width:1019px;height:19px;background:#a0a0a4;border-top:1px solid #808080;"></div>
<div class="a" style="left:6px;top:359px;width:18px;height:18px;background:#c0c0c0;"></div>
<div class="a" style="left:1007px;top:359px;width:18px;height:18px;background:#c0c0c0;"></div>
<svg class="a" style="left:6px;top:359px" width="18" height="18"><path d="M2.2 9L16.7 1.2V16.6Z" fill="#c0c0c0"/><path d="M2.2 9L16.7 1.4" stroke="#fff" stroke-width="1.3" fill="none"/><path d="M16.7 1.2V16.6L2.2 9" fill="none" stroke="#808080" stroke-width="1.3"/></svg>
<svg class="a" style="left:1007px;top:359px" width="18" height="18"><path d="M16.9 9L1.5 1.2V16.6Z" fill="#c0c0c0"/><path d="M1.5 16.6V1.2L16.9 9" stroke="#fff" stroke-width="1.3" fill="none"/><path d="M16.9 9L1.5 16.6" fill="none" stroke="#808080" stroke-width="1.3"/></svg>
<div class="a" style="left:24px;top:360px;width:49px;height:16px;background:#c0c0c0;border-top:1px solid #fff;border-left:2px solid #fff;border-right:2px solid #808080;border-bottom:2px solid #808080;"></div>
<div class="a" style="left:4px;top:380px;width:1024px;height:3px;background:#000;"></div>
<div class="a" style="left:762px;top:380px;width:3px;height:170px;background:#000;"></div>
<div class="a" style="left:0;top:383px;width:762px;height:167px;overflow:hidden;">
<div class="t" style="left:4.5px;top:3px;color:#000;font-size:12px;transform-origin:0 0;transform:scaleX(0.94);">Číslo úkolu</div>
<div class="a" style="left:5px;top:18px;width:98px;height:25px;background:#d4d0c8;border-top:2px solid #808080;border-left:2px solid #808080;border-right:2px solid #fff;border-bottom:2px solid #fff;overflow:hidden;"><div class="t" style="left:2px;top:4px;font-size:12px;transform-origin:0 0;transform:scaleX(0.92);color:#000">UKP000003</div></div>
<div class="t" style="left:104.5px;top:3px;color:#000;font-size:12px;transform-origin:0 0;transform:scaleX(0.94);">Druh</div>
<div class="a" style="left:105px;top:18px;width:72px;height:25px;background:#fff;border-top:1px solid #808080;border-left:1px solid #808080;border-right:1px solid #fff;border-bottom:1px solid #fff;overflow:hidden;"><div class="a" style="left:0;top:0;right:0;bottom:0;border-top:1px solid #000;border-left:1px solid #000;border-right:1px solid #c0c0c0;border-bottom:1px solid #c0c0c0;"></div><div class="t" style="left:3px;top:5px;font-size:12px;transform-origin:0 0;transform:scaleX(0.9);color:#000">interni</div></div>

<div class="dots" style="left:153px;top:20px;width:22px;height:21px;"><i style="left:6px;top:9px"></i><i style="left:10px;top:9px"></i><i style="left:14px;top:9px"></i></div>
<div class="t" style="left:179.5px;top:3px;color:#000;font-size:12px;transform-origin:0 0;transform:scaleX(0.94);">Popis</div>
<div class="a" style="left:179px;top:18px;width:299px;height:25px;background:#ffec80;border-top:2px solid #808080;border-left:2px solid #808080;border-right:2px solid #fff;border-bottom:2px solid #fff;overflow:hidden;"><div class="t" style="left:2px;top:4px;font-size:12px;transform-origin:0 0;transform:scaleX(0.94);color:#000">Vyřešit datum fakturace 1. etapy zakázky</div></div>
<div class="t" style="left:479.5px;top:3px;color:#000;font-size:12px;transform-origin:0 0;transform:scaleX(0.94);">Datum</div>
<div class="a" style="left:480px;top:18px;width:123px;height:25px;background:#d4d0c8;border-top:1px solid #808080;border-left:1px solid #808080;border-right:1px solid #fff;border-bottom:1px solid #fff;overflow:hidden;"><div class="a" style="left:0;top:0;right:0;bottom:0;border-top:1px solid #000;border-left:1px solid #000;border-right:1px solid #c0c0c0;border-bottom:1px solid #c0c0c0;"></div><div class="t" style="left:3px;top:5px;font-size:12px;transform-origin:0 0;transform:scaleX(0.902);color:#000">20.2.2013 11:54:43</div></div>

<div class="dots" style="left:578px;top:20px;width:23px;height:21px;"><i style="left:6px;top:9px"></i><i style="left:10px;top:9px"></i><i style="left:14px;top:9px"></i></div>
<div class="t" style="left:604.5px;top:3px;color:#000;font-size:12px;transform-origin:0 0;transform:scaleX(0.94);">Poslední změna</div>
<div class="a" style="left:605px;top:18px;width:123px;height:25px;background:#d4d0c8;border-top:1px solid #808080;border-left:1px solid #808080;border-right:1px solid #fff;border-bottom:1px solid #fff;overflow:hidden;"><div class="a" style="left:0;top:0;right:0;bottom:0;border-top:1px solid #000;border-left:1px solid #000;border-right:1px solid #c0c0c0;border-bottom:1px solid #c0c0c0;"></div><div class="t" style="left:3px;top:5px;font-size:12px;transform-origin:0 0;transform:scaleX(0.902);color:#000">20.2.2013 11:59:15</div></div>

<div class="dots" style="left:703px;top:20px;width:23px;height:21px;"><i style="left:6px;top:9px"></i><i style="left:10px;top:9px"></i><i style="left:14px;top:9px"></i></div>
<div class="t" style="left:4.5px;top:47px;color:#000;font-size:12px;transform-origin:0 0;transform:scaleX(0.94);">Milník</div>
<div class="a" style="left:5px;top:62px;width:73px;height:25px;background:#fff;border-top:1px solid #808080;border-left:1px solid #808080;border-right:1px solid #fff;border-bottom:1px solid #fff;overflow:hidden;"><div class="a" style="left:0;top:0;right:0;bottom:0;border-top:1px solid #000;border-left:1px solid #000;border-right:1px solid #c0c0c0;border-bottom:1px solid #c0c0c0;"></div><div class="t" style="left:3px;top:5px;font-size:12px;transform-origin:0 0;transform:scaleX(0.94);color:#000"></div></div>

<div class="dots" style="left:53px;top:64px;width:23px;height:21px;"><i style="left:6px;top:9px"></i><i style="left:10px;top:9px"></i><i style="left:14px;top:9px"></i></div>
<div class="t" style="left:79.5px;top:47px;color:#000;font-size:12px;transform-origin:0 0;transform:scaleX(0.94);">Termín</div>
<div class="a" style="left:80px;top:62px;width:148px;height:25px;background:#ffec80;border-top:1px solid #808080;border-left:1px solid #808080;border-right:1px solid #fff;border-bottom:1px solid #fff;overflow:hidden;"><div class="a" style="left:0;top:0;right:0;bottom:0;border-top:1px solid #000;border-left:1px solid #000;border-right:1px solid #c0c0c0;border-bottom:1px solid #c0c0c0;"></div><div class="t" style="left:3px;top:5px;font-size:12px;transform-origin:0 0;transform:scaleX(0.94);color:#000"></div></div>

<div class="dots" style="left:203px;top:64px;width:23px;height:21px;"><i style="left:6px;top:9px"></i><i style="left:10px;top:9px"></i><i style="left:14px;top:9px"></i></div>
<div class="t" style="left:229.5px;top:47px;color:#000;font-size:12px;transform-origin:0 0;transform:scaleX(0.915);">Upozornění</div>
<div class="a" style="left:230px;top:62px;width:148px;height:25px;background:#fff;border-top:1px solid #808080;border-left:1px solid #808080;border-right:1px solid #fff;border-bottom:1px solid #fff;overflow:hidden;"><div class="a" style="left:0;top:0;right:0;bottom:0;border-top:1px solid #000;border-left:1px solid #000;border-right:1px solid #c0c0c0;border-bottom:1px solid #c0c0c0;"></div><div class="t" style="left:3px;top:5px;font-size:12px;transform-origin:0 0;transform:scaleX(0.94);color:#000"></div></div>

<div class="dots" style="left:353px;top:64px;width:23px;height:21px;"><i style="left:6px;top:9px"></i><i style="left:10px;top:9px"></i><i style="left:14px;top:9px"></i></div>
<div class="t" style="left:379.5px;top:47px;color:#000;font-size:12px;transform-origin:0 0;transform:scaleX(0.94);">Priorita</div>
<div class="combo" style="left:380px;top:62px;width:98px;height:25px;background:#c0c0c0;border-width:2px;"><div class="a" style="left:0;top:0;width:79px;height:21px;background:#ffec80;border-top:1px solid #808080;border-left:1px solid #808080;border-right:1px solid #fff;border-bottom:1px solid #fff;"></div><div class="t" style="left:3px;top:4px;font-size:12px;transform-origin:0 0;transform:scaleX(0.955);">1 vysoká</div><svg class="a" style="right:1.5px;top:3px" width="12" height="16" viewBox="0 0 12 16"><path d="M1.2 0.8L6.2 9.8" stroke="#fff" stroke-width="1.8" fill="none"/><path d="M0.5 0.7H11.2" stroke="#fff" stroke-width="1.4" fill="none"/><path d="M10.8 1.2L6.4 9.6" stroke="#686868" stroke-width="1.3" fill="none"/><path d="M0.5 12.5H11" stroke="#fff" stroke-width="1"/><path d="M1.5 13.5H11.5" stroke="#707070" stroke-width="1"/><path d="M11 12V14" stroke="#707070" stroke-width="1"/></svg></div>
<div class="t" style="left:479.5px;top:47px;color:#000;font-size:12px;transform-origin:0 0;transform:scaleX(0.94);">Stav</div>
<div class="combo" style="left:480px;top:62px;width:98px;height:25px;background:#c0c0c0;border-width:2px;"><div class="a" style="left:0;top:0;width:79px;height:21px;background:#ffec80;border-top:1px solid #808080;border-left:1px solid #808080;border-right:1px solid #fff;border-bottom:1px solid #fff;"></div><div class="t" style="left:3px;top:4px;font-size:12px;transform-origin:0 0;transform:scaleX(0.9);">4 dokončený</div><svg class="a" style="right:1.5px;top:3px" width="12" height="16" viewBox="0 0 12 16"><path d="M1.2 0.8L6.2 9.8" stroke="#fff" stroke-width="1.8" fill="none"/><path d="M0.5 0.7H11.2" stroke="#fff" stroke-width="1.4" fill="none"/><path d="M10.8 1.2L6.4 9.6" stroke="#686868" stroke-width="1.3" fill="none"/><path d="M0.5 12.5H11" stroke="#fff" stroke-width="1"/><path d="M1.5 13.5H11.5" stroke="#707070" stroke-width="1"/><path d="M11 12V14" stroke="#707070" stroke-width="1"/></svg></div>
<div class="t" style="left:579.5px;top:47px;color:#000;font-size:12px;transform-origin:0 0;transform:scaleX(0.94);">Zadavatel</div>
<div class="a" style="left:580px;top:62px;width:73px;height:25px;background:#d4d0c8;border-top:1px solid #808080;border-left:1px solid #808080;border-right:1px solid #fff;border-bottom:1px solid #fff;overflow:hidden;"><div class="a" style="left:0;top:0;right:0;bottom:0;border-top:1px solid #000;border-left:1px solid #000;border-right:1px solid #c0c0c0;border-bottom:1px solid #c0c0c0;"></div><div class="t" style="left:3px;top:5px;font-size:12px;transform-origin:0 0;transform:scaleX(0.94);color:#000">Admin</div></div>

<div class="dots" style="left:628px;top:64px;width:23px;height:21px;"><i style="left:6px;top:9px"></i><i style="left:10px;top:9px"></i><i style="left:14px;top:9px"></i></div>
<div class="t" style="left:654.5px;top:47px;color:#000;font-size:12px;transform-origin:0 0;transform:scaleX(0.94);">Řešitel</div>
<div class="a" style="left:655px;top:62px;width:73px;height:25px;background:#ffec80;border-top:1px solid #808080;border-left:1px solid #808080;border-right:1px solid #fff;border-bottom:1px solid #fff;overflow:hidden;"><div class="a" style="left:0;top:0;right:0;bottom:0;border-top:1px solid #000;border-left:1px solid #000;border-right:1px solid #c0c0c0;border-bottom:1px solid #c0c0c0;"></div><div class="t" style="left:3px;top:5px;font-size:12px;transform-origin:0 0;transform:scaleX(0.94);color:#000">User</div></div>

<div class="dots" style="left:703px;top:64px;width:23px;height:21px;"><i style="left:6px;top:9px"></i><i style="left:10px;top:9px"></i><i style="left:14px;top:9px"></i></div>
<div class="t" style="left:4.5px;top:91px;color:#000;font-size:12px;transform-origin:0 0;transform:scaleX(0.94);">Partner</div>
<div class="a" style="left:5px;top:106px;width:73px;height:25px;background:#fff;border-top:1px solid #808080;border-left:1px solid #808080;border-right:1px solid #fff;border-bottom:1px solid #fff;overflow:hidden;"><div class="a" style="left:0;top:0;right:0;bottom:0;border-top:1px solid #000;border-left:1px solid #000;border-right:1px solid #c0c0c0;border-bottom:1px solid #c0c0c0;"></div><div class="t" style="left:3px;top:5px;font-size:12px;transform-origin:0 0;transform:scaleX(0.92);color:#000">P000000</div></div>

<div class="dots" style="left:53px;top:108px;width:23px;height:21px;"><i style="left:6px;top:9px"></i><i style="left:10px;top:9px"></i><i style="left:14px;top:9px"></i></div>
<div class="t" style="left:79.5px;top:91px;color:#000;font-size:12px;transform-origin:0 0;transform:scaleX(0.94);">Firma</div>
<div class="a" style="left:80px;top:106px;width:148px;height:25px;background:#d4d0c8;border-top:2px solid #808080;border-left:2px solid #808080;border-right:2px solid #fff;border-bottom:2px solid #fff;overflow:hidden;"><div class="t" style="left:2px;top:4px;font-size:12px;transform-origin:0 0;transform:scaleX(0.94);color:#000">HC Tesla Pardubice</div></div>
<div class="t" style="left:229.5px;top:91px;color:#000;font-size:12px;transform-origin:0 0;transform:scaleX(0.94);">Zástupce</div>
<div class="a" style="left:230px;top:106px;width:98px;height:25px;background:#fff;border-top:1px solid #808080;border-left:1px solid #808080;border-right:1px solid #fff;border-bottom:1px solid #fff;overflow:hidden;"><div class="a" style="left:0;top:0;right:0;bottom:0;border-top:1px solid #000;border-left:1px solid #000;border-right:1px solid #c0c0c0;border-bottom:1px solid #c0c0c0;"></div><div class="t" style="left:3px;top:5px;font-size:12px;transform-origin:0 0;transform:scaleX(0.94);color:#000"></div></div>

<div class="dots" style="left:303px;top:108px;width:23px;height:21px;"><i style="left:6px;top:9px"></i><i style="left:10px;top:9px"></i><i style="left:14px;top:9px"></i></div>
<div class="t" style="left:329.5px;top:91px;color:#000;font-size:12px;transform-origin:0 0;transform:scaleX(0.94);">Číslo zakázky</div>
<div class="a" style="left:330px;top:106px;width:73px;height:25px;background:#fff;border-top:1px solid #808080;border-left:1px solid #808080;border-right:1px solid #fff;border-bottom:1px solid #fff;overflow:hidden;"><div class="a" style="left:0;top:0;right:0;bottom:0;border-top:1px solid #000;border-left:1px solid #000;border-right:1px solid #c0c0c0;border-bottom:1px solid #c0c0c0;"></div><div class="t" style="left:3px;top:5px;font-size:12px;transform-origin:0 0;transform:scaleX(0.92);color:#000">Z010001</div></div>

<div class="dots" style="left:378px;top:108px;width:23px;height:21px;"><i style="left:6px;top:9px"></i><i style="left:10px;top:9px"></i><i style="left:14px;top:9px"></i></div>
<div class="t" style="left:404.5px;top:91px;color:#000;font-size:12px;transform-origin:0 0;transform:scaleX(0.94);">Pol. zakázky</div>
<div class="a" style="left:405px;top:106px;width:73px;height:25px;background:#fff;border-top:1px solid #808080;border-left:1px solid #808080;border-right:1px solid #fff;border-bottom:1px solid #fff;overflow:hidden;"><div class="a" style="left:0;top:0;right:0;bottom:0;border-top:1px solid #000;border-left:1px solid #000;border-right:1px solid #c0c0c0;border-bottom:1px solid #c0c0c0;"></div><div class="t" style="left:3px;top:5px;font-size:12px;transform-origin:0 0;transform:scaleX(0.94);color:#000"></div></div>

<div class="dots" style="left:453px;top:108px;width:23px;height:21px;"><i style="left:6px;top:9px"></i><i style="left:10px;top:9px"></i><i style="left:14px;top:9px"></i></div>
<div class="t" style="left:479.5px;top:91px;color:#000;font-size:12px;transform-origin:0 0;transform:scaleX(0.94);">Popis zakázky</div>
<div class="a" style="left:480px;top:106px;width:248px;height:25px;background:#d4d0c8;border-top:2px solid #808080;border-left:2px solid #808080;border-right:2px solid #fff;border-bottom:2px solid #fff;overflow:hidden;"><div class="t" style="left:2px;top:4px;font-size:12px;transform-origin:0 0;transform:scaleX(0.94);color:#000">(ROZ, HOD, EZS, TEL), Krytý plav. bazén Pardubice</div></div>
<div class="t" style="left:4.5px;top:135px;color:#000;font-size:12px;transform-origin:0 0;transform:scaleX(0.94);">Kód výkonu</div>
<div class="a" style="left:5px;top:150px;width:98px;height:25px;background:#fff;border-top:1px solid #808080;border-left:1px solid #808080;border-right:1px solid #fff;border-bottom:1px solid #fff;overflow:hidden;"><div class="a" style="left:0;top:0;right:0;bottom:0;border-top:1px solid #000;border-left:1px solid #000;border-right:1px solid #c0c0c0;border-bottom:1px solid #c0c0c0;"></div><div class="t" style="left:3px;top:5px;font-size:12px;transform-origin:0 0;transform:scaleX(0.94);color:#000"></div></div>

<div class="dots" style="left:78px;top:152px;width:23px;height:21px;"><i style="left:6px;top:9px"></i><i style="left:10px;top:9px"></i><i style="left:14px;top:9px"></i></div>
<div class="t" style="left:104.5px;top:135px;color:#000;font-size:12px;transform-origin:0 0;transform:scaleX(0.94);">Na vědomí</div>
<div class="a" style="left:105px;top:150px;width:423px;height:25px;background:#fff;border-top:1px solid #808080;border-left:1px solid #808080;border-right:1px solid #fff;border-bottom:1px solid #fff;overflow:hidden;"><div class="a" style="left:0;top:0;right:0;bottom:0;border-top:1px solid #000;border-left:1px solid #000;border-right:1px solid #c0c0c0;border-bottom:1px solid #c0c0c0;"></div><div class="t" style="left:3px;top:5px;font-size:12px;transform-origin:0 0;transform:scaleX(0.94);color:#000"></div></div>
<div class="t" style="left:529.5px;top:135px;color:#000;font-size:12px;transform-origin:0 0;transform:scaleX(0.94);">Plán hodi</div>
<div class="a" style="left:530px;top:150px;width:48px;height:25px;background:#fff;border-top:1px solid #808080;border-left:1px solid #808080;border-right:1px solid #fff;border-bottom:1px solid #fff;overflow:hidden;"><div class="a" style="left:0;top:0;right:0;bottom:0;border-top:1px solid #000;border-left:1px solid #000;border-right:1px solid #c0c0c0;border-bottom:1px solid #c0c0c0;"></div><div class="t" style="left:3px;top:5px;font-size:12px;transform-origin:0 0;transform:scaleX(0.94);color:#000"></div></div>
<div class="t" style="left:579.5px;top:135px;color:#000;font-size:12px;transform-origin:0 0;transform:scaleX(0.94);">Hodin</div>
<div class="a" style="left:580px;top:150px;width:73px;height:25px;background:#d4d0c8;border-top:2px solid #808080;border-left:2px solid #808080;border-right:2px solid #fff;border-bottom:2px solid #fff;overflow:hidden;"><div class="t" style="left:2px;top:4px;font-size:12px;transform-origin:0 0;transform:scaleX(0.94);color:#000"></div></div>
<div class="t" style="left:654.5px;top:135px;color:#000;font-size:12px;transform-origin:0 0;transform:scaleX(0.94);">Práva</div>
<div class="a" style="left:655px;top:150px;width:73px;height:25px;background:#fff;border-top:1px solid #808080;border-left:1px solid #808080;border-right:1px solid #fff;border-bottom:1px solid #fff;overflow:hidden;"><div class="a" style="left:0;top:0;right:0;bottom:0;border-top:1px solid #000;border-left:1px solid #000;border-right:1px solid #c0c0c0;border-bottom:1px solid #c0c0c0;"></div><div class="t" style="left:9px;top:5px;font-size:12px;transform-origin:0 0;transform:scaleX(0.94);color:#000">(práva)</div></div>

<div class="dots" style="left:703px;top:152px;width:23px;height:21px;"><i style="left:6px;top:9px"></i><i style="left:10px;top:9px"></i><i style="left:14px;top:9px"></i></div>
<div class="a" style="left:747px;top:153px;width:13px;height:13px;background:#a0a0a4;border-top:2px solid #808080;border-left:2px solid #808080;border-right:2px solid #f4f4f4;border-bottom:2px solid #f4f4f4;"></div>
</div>
<div class="a" style="left:765px;top:383px;width:263px;height:167px;background:#fff;border-top:1px solid #808080;border-left:1px solid #808080;border-right:1px solid #fff;border-bottom:1px solid #fff;"><div class="a" style="left:0;top:0;right:0;bottom:0;border-top:1px solid #000;border-left:1px solid #000;border-right:1px solid #dcdcdc;border-bottom:1px solid #dcdcdc;"></div></div>
<div class="t" style="left:770px;top:387px;color:#000;font-size:12px;transform-origin:0 0;transform:scaleX(0.94);">Je třeba vyfakturovat co nejdříve</div>
<div class="a" style="left:4px;top:553px;width:42px;height:21px;background:#fff;border-top:1px solid #000;border-left:1px solid #000;border-right:1px solid #fff;border-bottom:1px solid #fff;box-shadow:-1px -1px 0 #808080;"></div>
<div class="a" style="left:50px;top:553px;width:2px;height:21px;border-left:1px solid #808080;border-right:1px solid #f0f0f0;"></div>
<div class="a" style="left:108px;top:553px;width:2px;height:21px;border-left:1px solid #808080;border-right:1px solid #f0f0f0;"></div>
<div class="a" style="left:164px;top:553px;width:2px;height:21px;border-left:1px solid #808080;border-right:1px solid #f0f0f0;"></div>
<div class="t" style="left:63px;top:557px;color:#000;font-size:12px;transform-origin:0 0;transform:scaleX(0.9);">externi</div>
<div class="t" style="left:121px;top:557px;color:#000;font-size:12px;transform-origin:0 0;transform:scaleX(0.9);">interni</div>
<div class="a" style="left:0;top:577px;width:1031px;height:1px;background:#808080;"></div>
<div class="a" style="left:0;top:578px;width:1033px;height:1px;background:#000;"></div>
<div class="a" style="left:0;top:581px;width:60px;height:20px;border-top:1px solid #808080;border-left:1px solid #808080;border-right:1px solid #fff;border-bottom:1px solid #fff;"></div>
<div class="a" style="left:62px;top:581px;width:970px;height:20px;background:#c0c0c0;border-top:1px solid #808080;border-left:1px solid #808080;border-right:1px solid #fff;border-bottom:1px solid #fff;"></div>
<div class="t" style="left:3px;top:585px;color:#000;font-size:12px;transform-origin:0 0;transform:scaleX(0.94);">0/5</div>
<div class="t" style="left:64px;top:585px;color:#000;font-size:12px;transform-origin:0 0;transform:scaleX(0.94);">Datum poslední změny [ukoly_ukoly.DatumPZmeny]</div>
<svg class="a" style="left:1017px;top:586px" width="14" height="14"><path d="M1.4 13.4L13.2 1.6M5.7 13.4L13.2 5.9M10 13.4L13.2 10.2" stroke="#808080" stroke-width="1.4"/><path d="M0 13L13 0M4.3 13L13 4.3M8.6 13L13 8.6" stroke="#fff" stroke-width="1.3"/></svg>
<div class="a" style="left:630px;top:367px;width:271px;height:21px;background:#ffffe1;border:1px solid #000;box-shadow:2px 2px 4px rgba(0,0,0,0.35);"></div>
<div class="t" style="left:633px;top:371px;color:#000;font-size:12px;transform-origin:0 0;transform:scaleX(0.94);">Datum poslední změny [ukoly_ukoly.DatumPZmeny]</div>
<svg class="a" style="left:628px;top:345px" width="18" height="26" viewBox="0 0 18 26"><defs><linearGradient id="gcur" x1="0" y1="0" x2="1" y2="0"><stop offset="0" stop-color="#fff"/><stop offset="1" stop-color="#d0d0d0"/></linearGradient></defs><path d="M2.3 3.2V20.2L6.2 16.6L8.8 21.5L11.4 20.3L9 15.6L13.8 14.9Z" fill="url(#gcur)" stroke="#000" stroke-width="1.4" stroke-linejoin="miter"/></svg>
</div></body></html>
